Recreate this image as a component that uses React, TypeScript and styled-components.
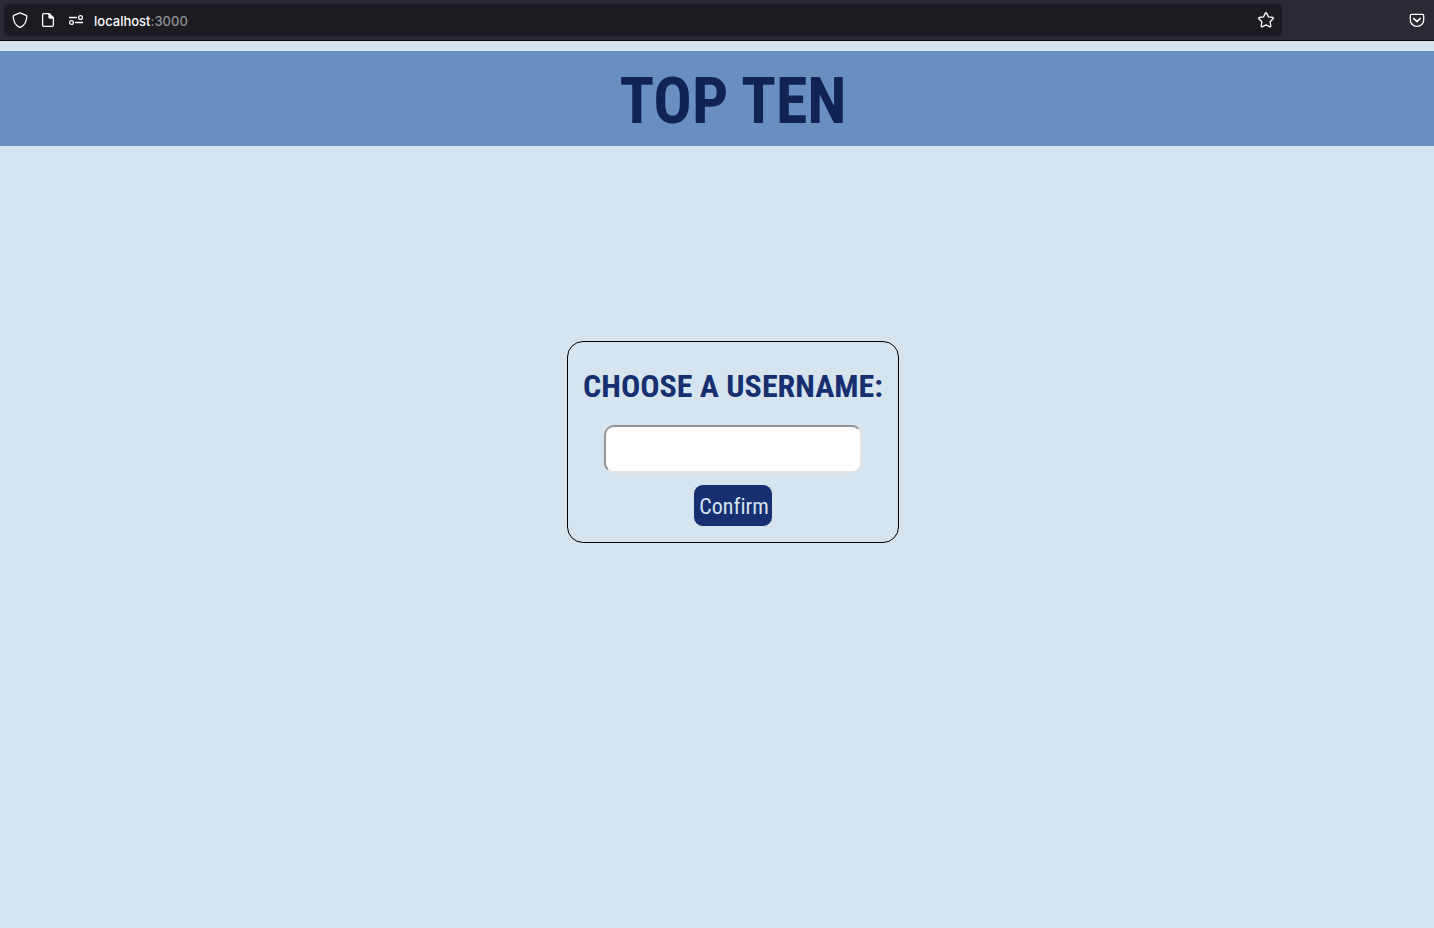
import React from "react";
import styled, { createGlobalStyle } from "styled-components";

const GlobalStyle = createGlobalStyle`
  * { box-sizing: border-box; }
  body {
    margin: 0;
    background: #d6e4ef;
    font-family: "Roboto Condensed", "Open Sans Condensed", Roboto, sans-serif;
  }
`;

const Toolbar = styled.div`
  display: flex;
  align-items: center;
  height: 41px;
  padding: 0 9px 0 4px;
  background: #2b2a33;
  border-bottom: 1px solid #0c0c0d;
`;

const AddressBar = styled.div`
  display: flex;
  flex: 1;
  align-items: center;
  gap: 12px;
  height: 32px;
  margin-right: 127px;
  padding: 0 8px;
  border-radius: 4px;
  background: #1c1b22;
`;

const IconButton = styled.button`
  display: flex;
  padding: 0;
  border: 0;
  background: none;
  color: #fbfbfe;
`;

const Address = styled.div`
  flex: 1;
  margin-left: -2px;
  padding-top: 2px;
  color: #8f8f94;
  font: 500 13px/20px Inter, "Liberation Sans", sans-serif;
`;

const Host = styled.span`
  color: #fbfbfe;
`;

const Header = styled.header`
  margin-top: 10px;
  padding: 16px 0 9px 32px;
  background: #698fc1;
  text-align: center;
`;

const Title = styled.h1`
  margin: 0;
  color: #112353;
  font-size: 64px;
  line-height: 70px;
`;

const Main = styled.main`
  display: flex;
  justify-content: center;
  padding: 195px 0 32px 32px;
`;

const Card = styled.form`
  display: flex;
  flex-direction: column;
  align-items: center;
  width: 332px;
  padding: 24px 0 15px;
  border: 1px solid #000;
  border-radius: 16px;
`;

const Label = styled.label`
  color: #172f70;
  font-size: 32px;
  font-weight: bold;
  line-height: 40px;
  white-space: nowrap;
`;

const NameInput = styled.input`
  width: 258px;
  height: 48px;
  margin: 19px 0 11px;
  padding: 0 8px;
  border: 2px solid;
  border-color: #949494 #e4e4e4 #e4e4e4 #949494;
  border-radius: 10px;
  background: #fff;
  font-family: inherit;
  font-size: 24px;
`;

const ConfirmButton = styled.button`
  width: 80px;
  height: 43px;
  padding: 2px 0 0 2px;
  border: 1px solid #d6e4ef;
  border-radius: 10px;
  background: #172f70;
  color: #d6e4ef;
  font-family: inherit;
  font-size: 22px;
  font-variant-ligatures: none;
  line-height: 32px;
`;

function Icon({ children }: { children: React.ReactNode }) {
  return (
    <svg
      width="16"
      height="16"
      viewBox="0 0 16 16"
      fill="none"
      stroke="currentColor"
      strokeWidth="1.3"
      strokeLinecap="round"
      strokeLinejoin="round"
      aria-hidden="true"
    >
      {children}
    </svg>
  );
}

export default function App() {
  return (
    <>
      <GlobalStyle />
      <Toolbar>
        <AddressBar>
          <IconButton aria-label="Tracking protection">
            <Icon>
              <path d="M8 .8 14.2 3.4c.5.2.7.6.6 1.1-.2 4.8-2 8.4-5.7 10.4-.7.5-1.5.5-2.2 0-3.7-2-5.5-5.6-5.7-10.4 0-.5.2-.9.6-1.1Z" />
            </Icon>
          </IconButton>
          <IconButton aria-label="Page information">
            <Icon>
              <path d="M4 1.6h5.2l4.2 4.2V13c0 .8-.6 1.4-1.4 1.4H4c-.8 0-1.4-.6-1.4-1.4V3c0-.8.6-1.4 1.4-1.4Z" />
              <path d="M9 1.8v3.5c0 .4.3.7.7.7h3.5Z" fill="currentColor" />
            </Icon>
          </IconButton>
          <IconButton aria-label="Site permissions">
            <Icon>
              <path d="M1.5 5.5h7M7.5 10.5h7" />
              <circle cx="12.5" cy="5.5" r="1.9" />
              <circle cx="3.5" cy="10.5" r="1.9" />
            </Icon>
          </IconButton>
          <Address>
            <Host>localhost</Host>:3000
          </Address>
          <IconButton aria-label="Bookmark this page">
            <Icon>
              <path d="M7.4 1.1c.3-.5.9-.5 1.2 0l1.9 3.8 4.2.6c.6.1.8.8.4 1.2l-3 3 .7 4.4c.1.6-.5 1-1 .7L8 12.8l-3.8 2c-.5.3-1.1-.1-1-.7l.7-4.4-3-3c-.4-.4-.2-1.1.4-1.2l4.2-.6Z" />
            </Icon>
          </IconButton>
        </AddressBar>
        <IconButton aria-label="Save to Pocket">
          <Icon>
            <path d="M2.7 2.4h10.6c.8 0 1.4.6 1.4 1.4v4.1a6.7 6.4 0 0 1-13.4 0V3.8c0-.8.6-1.4 1.4-1.4Z" />
            <path d="m4.8 6.6 3.2 3 3.2-3" strokeWidth="1.6" />
          </Icon>
        </IconButton>
      </Toolbar>
      <Header>
        <Title>TOP TEN</Title>
      </Header>
      <Main>
        <Card onSubmit={(event) => event.preventDefault()}>
          <Label htmlFor="username">CHOOSE A USERNAME:</Label>
          <NameInput id="username" type="text" autoComplete="off" />
          <ConfirmButton type="submit">Confirm</ConfirmButton>
        </Card>
      </Main>
    </>
  );
}
